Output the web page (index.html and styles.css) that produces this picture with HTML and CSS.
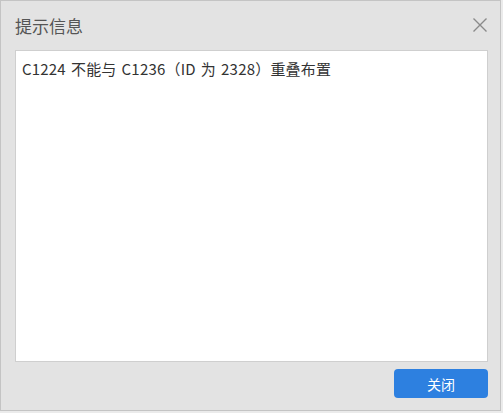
FILE: index.html
```html
<!DOCTYPE html>
<html lang="zh-CN">
<head>
<meta charset="utf-8">
<link rel="stylesheet" href="styles.css">
</head>
<body>
<div class="dialog">
  <div class="header">
    <span class="title">提示信息</span>
    <svg class="close" width="16" height="16" viewBox="0 0 16 16"><path d="M1.5 1.5 L14.5 14.5 M14.5 1.5 L1.5 14.5" stroke="#8a8a8a" stroke-width="1.4" fill="none"/></svg>
  </div>
  <div class="content">C1224 不能与 C1236（ID 为 2328）重叠布置</div>
  <div class="footer">
    <button class="btn">关闭</button>
  </div>
</div>
</body>
</html>
```
FILE: styles.css
```css
html, body {
  margin: 0;
  padding: 0;
  background: #ebebeb;
}
body {
  font-family: "Noto Sans CJK SC", "Noto Sans", sans-serif;
}
.dialog {
  box-sizing: border-box;
  width: 501px;
  height: 411px;
  border: 1px solid #c4c4c4;
  background: #e3e3e3;
  padding: 0 12px 12px 14px;
  display: flex;
  flex-direction: column;
}
.header {
  height: 49px;
  display: flex;
  align-items: center;
  justify-content: space-between;
}
.title {
  font-size: 17px;
  color: #555;
  margin-top: -1px;
}
.close {
  margin-top: -2px;
}
.content {
  flex: 1;
  background: #fff;
  border: 1px solid #cfcfcf;
  padding: 7px 6px;
  font-size: 15px;
  color: #333;
  line-height: 22px;
  word-spacing: 1.5px;
  letter-spacing: 0.2px;
}
.footer {
  display: flex;
  justify-content: flex-end;
  padding-top: 7px;
}
.btn {
  width: 94px;
  height: 29px;
  border: none;
  border-radius: 4px;
  background: #2d80e0;
  color: #fff;
  font-family: "Noto Sans CJK SC", sans-serif;
  font-size: 14px;
  padding: 0;
}
```
